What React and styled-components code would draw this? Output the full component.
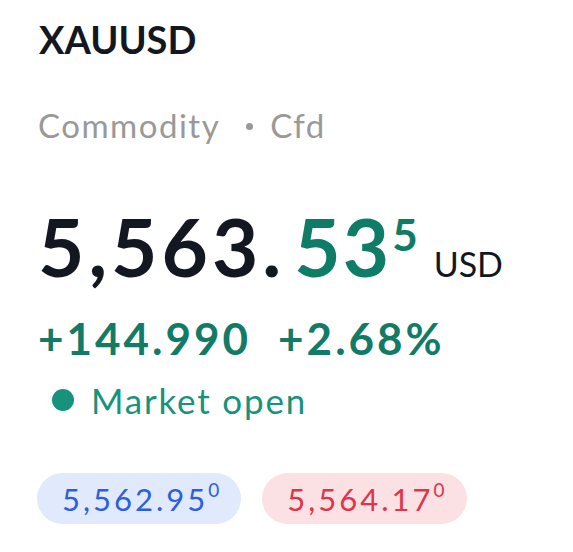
import styled, { createGlobalStyle } from "styled-components"

const GlobalStyle = createGlobalStyle`
  html, body {
    margin: 0;
    background: #ffffff;
  }
  body {
    font-family: "Lato", "Open Sans", "DejaVu Sans", sans-serif;
    color: #131722;
  }
`;

const Card = styled.div`
  display: flex;
  flex-direction: column;
  align-items: flex-start;
  padding: 17px 38px;
`;

const Symbol = styled.h1`
  margin: 0 0 0 1px;
  font-size: 38px;
  line-height: 44px;
  font-weight: 700;
`;

const Meta = styled.div`
  margin-top: 44px;
  font-size: 33px;
  line-height: 40px;
  letter-spacing: 1.5px;
  color: #999999;
  display: flex;
  align-items: center;
`;

const Dot = styled.span`
  width: ${p => p.size}px;
  height: ${p => p.size}px;
  border-radius: 50%;
  background: ${p => p.color};
  flex-shrink: 0;
`;

const Bullet = styled(Dot)`
  margin: 2px 17px 0 26px;
`;

const PriceRow = styled.div`
  margin-top: 61px;
  display: flex;
  align-items: baseline;
`;

const Price = styled.span`
  font-size: 80px;
  line-height: 80px;
  font-weight: 700;
  letter-spacing: ${p => p.spacing}px;
  margin-left: ${p => p.offset || 0}px;
  color: ${p => p.color || "#131722"};
`;

const Sup = styled.span`
  margin-left: 1px;
  font-size: 44px;
  font-weight: 700;
  color: #0e7c66;
  position: relative;
  top: -26px;
`;

const Currency = styled.span`
  margin-left: 16px;
  font-size: 34px;
  color: #131722;
`;

const ChangeRow = styled.div`
  margin-top: 27px;
  display: flex;
  gap: 27px;
  font-size: 44px;
  line-height: 50px;
  font-weight: 700;
  color: #127b67;
  letter-spacing: 3px;
`;

const Status = styled.div`
  margin-top: 15px;
  margin-left: 14px;
  display: flex;
  align-items: center;
  gap: 17px;
  font-size: 35px;
  line-height: 44px;
  letter-spacing: 1.8px;
  color: #16937a;
`;

const Quotes = styled.div`
  margin-top: 51px;
  margin-left: -1px;
  display: flex;
  gap: 21px;
`;

const Pill = styled.div`
  height: 51px;
  padding: 0 22px 0 25px;
  border-radius: 26px;
  display: flex;
  align-items: center;
  background: ${p => p.bg};
  color: ${p => p.fg};
  font-size: 31px;
  letter-spacing: 3px;
`;

const Tiny = styled.span`
  font-size: 19px;
  letter-spacing: 0;
  position: relative;
  top: -9px;
`;

const App = () => {
  return (
    <Card>
      <GlobalStyle />
      <Symbol>XAUUSD</Symbol>
      <Meta>
        Commodity
        <Bullet size={7} color="#999999" />
        Cfd
      </Meta>
      <PriceRow>
        <Price spacing={4}>5,563.</Price>
        <Price spacing={2} offset={9} color="#0e7c66">53</Price>
        <Sup>5</Sup>
        <Currency>USD</Currency>
      </PriceRow>
      <ChangeRow>
        <span>+144.990</span>
        <span>+2.68%</span>
      </ChangeRow>
      <Status>
        <Dot size={22} color="#16937a" />
        Market open
      </Status>
      <Quotes>
        <Pill bg="#e1e9fc" fg="#2c5fe0">
          5,562.95<Tiny>0</Tiny>
        </Pill>
        <Pill bg="#fbe1e4" fg="#e0344a">
          5,564.17<Tiny>0</Tiny>
        </Pill>
      </Quotes>
    </Card>
  )
}

export default App
